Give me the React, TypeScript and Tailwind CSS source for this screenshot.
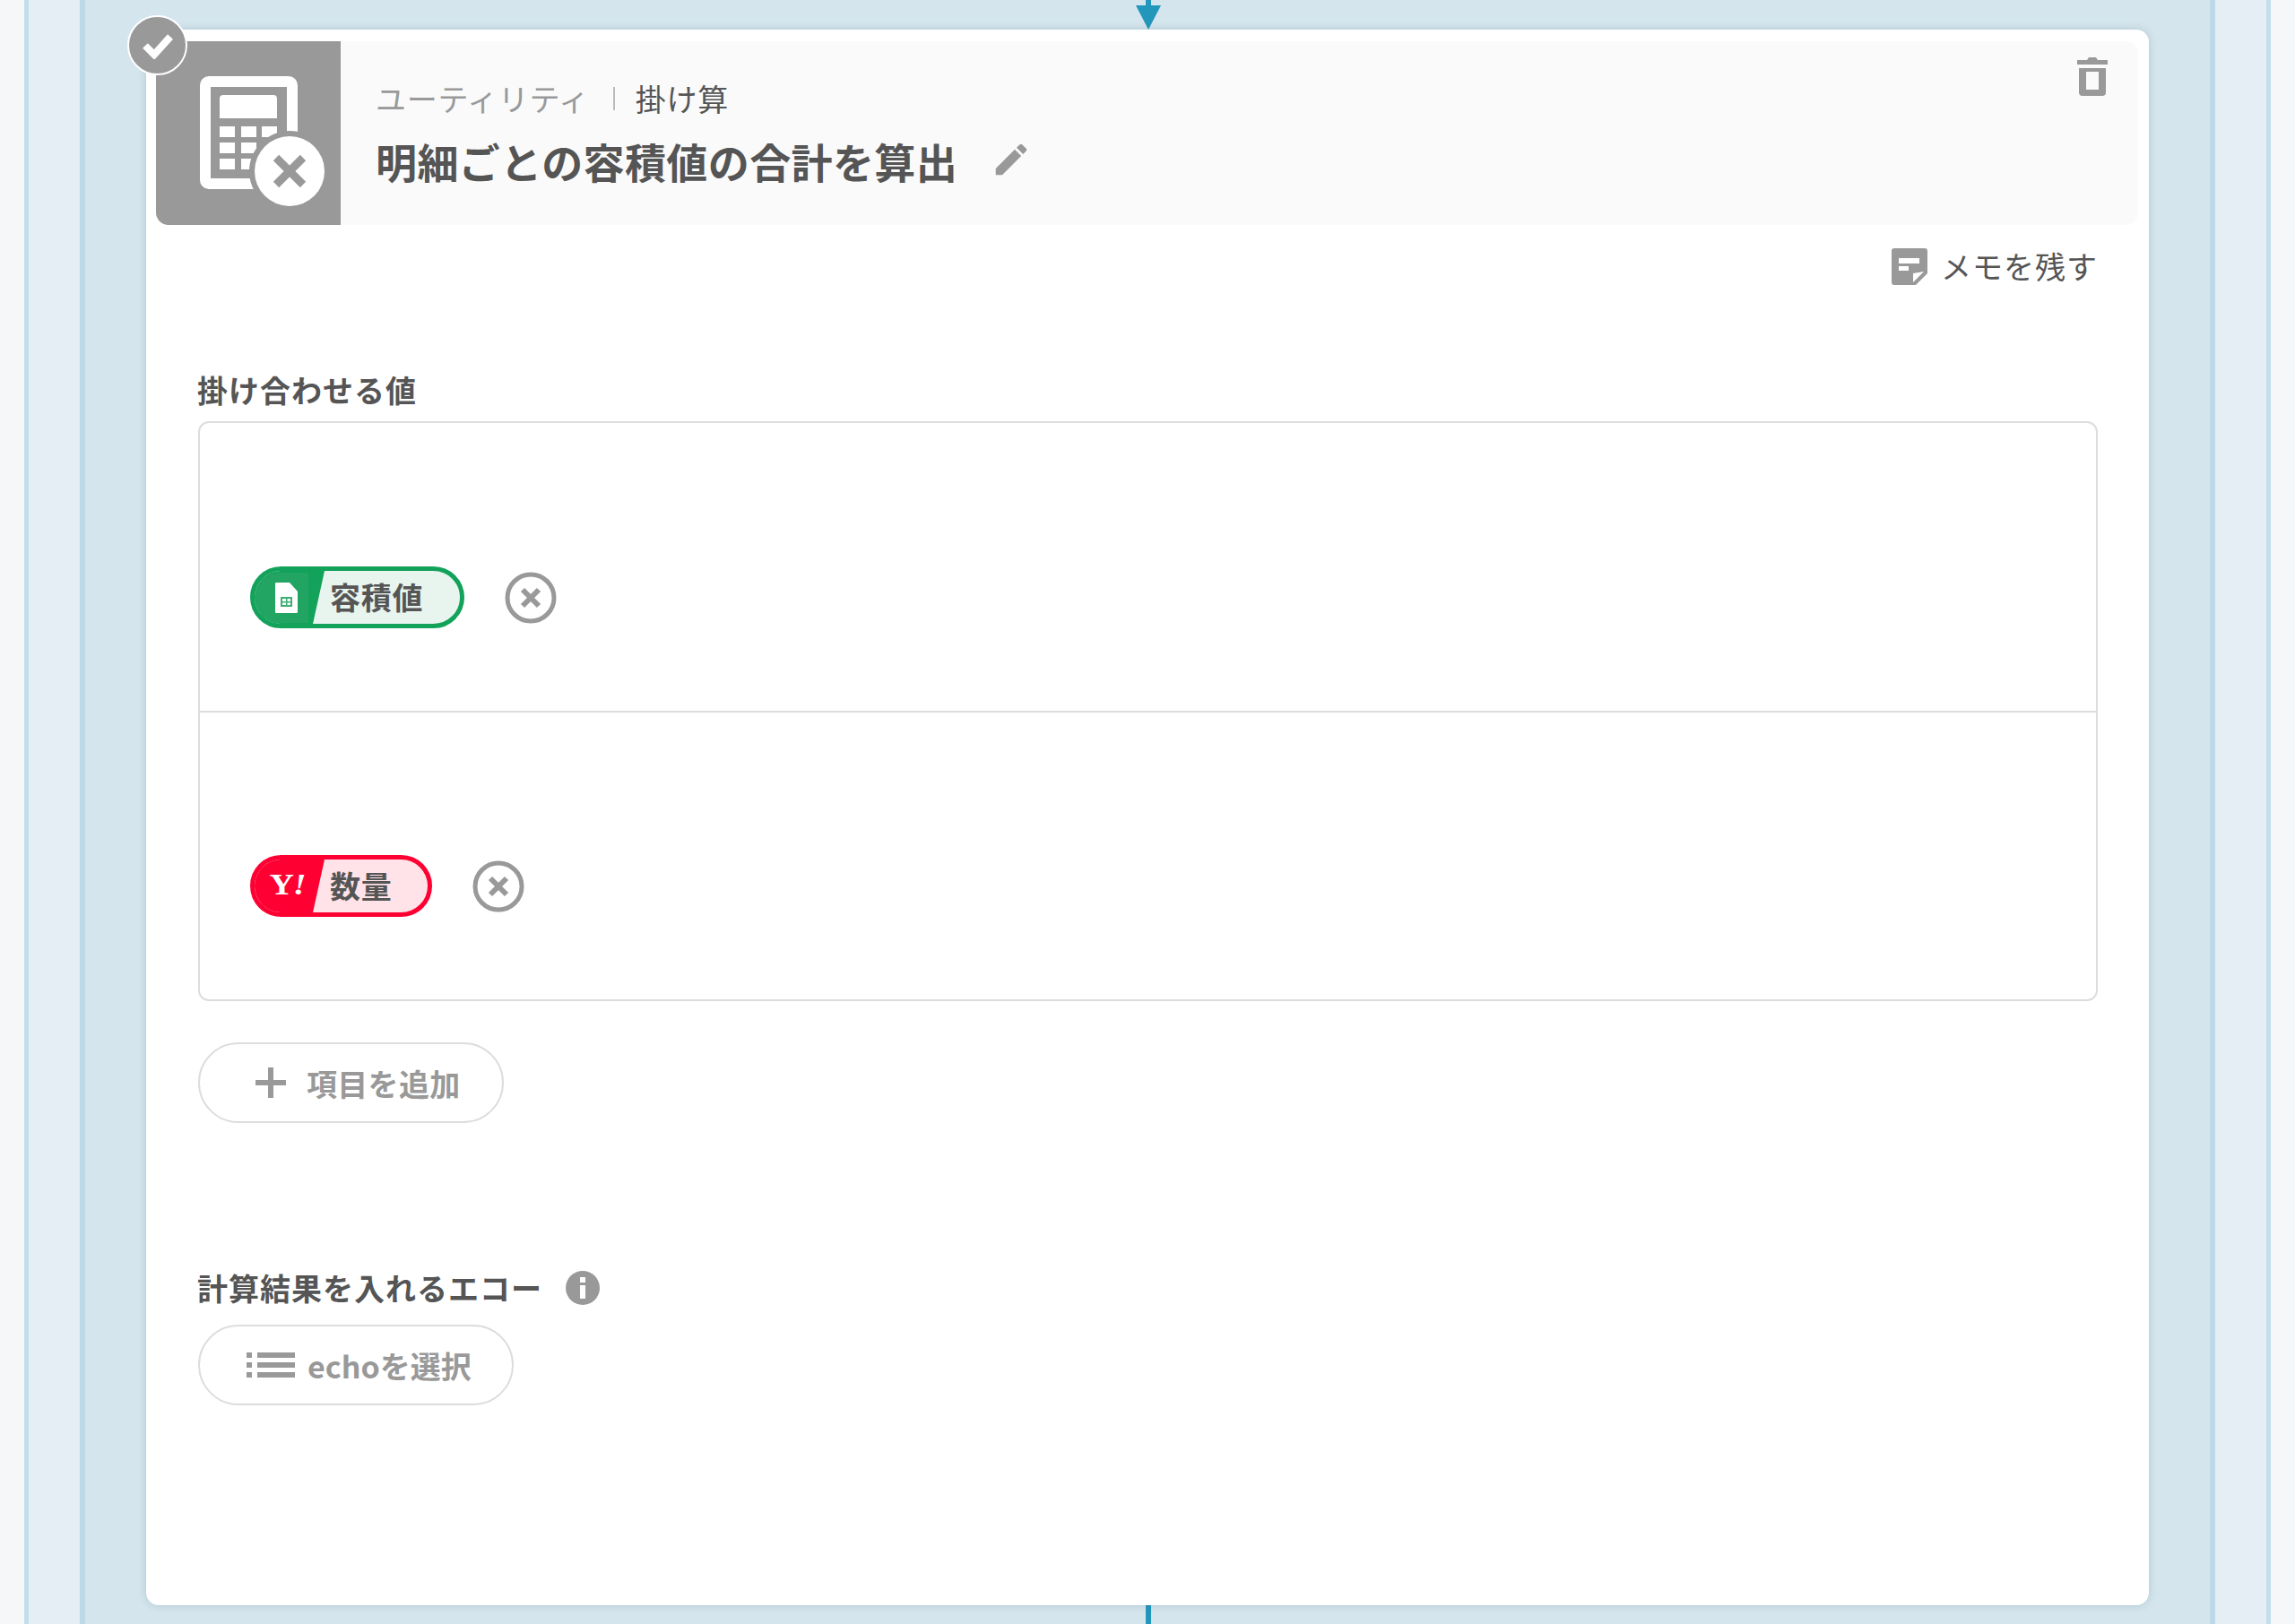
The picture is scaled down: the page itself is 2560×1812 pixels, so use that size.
const Cross = () => (
  <svg width="58" height="58" viewBox="0 0 58 58" className="block shrink-0">
    <circle cx="29" cy="29" r="26" fill="none" stroke="#999999" strokeWidth="5" />
    <path d="M20 20 38 38M38 20 20 38" stroke="#999999" strokeWidth="6" />
  </svg>
);

const Sheet = () => (
  <svg width="25" height="34" viewBox="0 0 25 34" className="block">
    <path d="M0 1a1 1 0 0 1 1-1H16L25 10V33a1 1 0 0 1-1 1H1a1 1 0 0 1-1-1Z" fill="#ffffff" />
    <path d="M6 16H19V27H6ZM8 18V21H12V18ZM13.500 18V21H17V18ZM8 22.500V25H12V22.500ZM13.500 22.500V25H17V22.500Z" fill="#3fae73" fillRule="evenodd" />
  </svg>
);

export default function App() {
  return (
    <div className="h-[1812px] w-[2560px] overflow-hidden bg-[#f5f7f9] px-[27px] font-['Noto_Sans_CJK_JP',sans-serif] text-[#555555]">
      <div className="h-full border-x-[5px] border-[#c3deea] bg-[#e6eef5] px-[57px]">
        <div className="flex h-full flex-col border-x-[6px] border-[#bcd9e7] bg-[#d4e5ed] px-[68px]">
          <svg width="30" height="33" viewBox="0 0 30 33" className="mx-auto block shrink-0 translate-x-px">
            <path d="M12 0H18V6H12Z" fill="#2396bc" />
            <path d="M1 6H29L15 33Z" fill="#2396bc" />
          </svg>
          <section className="relative flex h-[1758px] shrink-0 flex-col rounded-[14px] bg-white shadow-[0_0_10px_rgba(60,90,110,0.22)]">
            <div className="absolute left-[-21px] top-[-16px] flex h-[67px] w-[67px] items-center justify-center rounded-full border-2 border-white bg-[#999999]">
              <svg width="36" height="30" viewBox="0 0 36 30">
                <path d="M4 15 14 25 32 5" fill="none" stroke="#ffffff" strokeWidth="8" />
              </svg>
            </div>
            <header className="ml-[11px] mr-[12px] mt-[13px] flex h-[205px] shrink-0 rounded-r-[14px] rounded-bl-[14px] bg-[#fafafa]">
              <div className="h-[205px] w-[206px] shrink-0 overflow-hidden rounded-bl-[14px] bg-[#999999]">
                <svg width="206" height="205" viewBox="0 0 206 205" className="block">
                  <path
                    fillRule="evenodd"
                    fill="#ffffff"
                    d="M59 39H148A10 10 0 0 1 158 49V155A10 10 0 0 1 148 165H59A10 10 0 0 1 49 155V49A10 10 0 0 1 59 39ZM61 51V153H146V51Z"
                  />
                  <path d="M75 60H131A4 4 0 0 1 135 64V86H71V64A4 4 0 0 1 75 60Z" fill="#ffffff" />
                  <path
                    fill="#ffffff"
                    d="M71 95H88V107H71ZM95 95H112V107H95ZM118 95H135V107H118ZM71 113H88V125H71ZM95 113H112V125H95ZM118 113H135V125H118ZM71 131H88V143H71ZM95 131H112V143H95ZM118 131H135V143H118Z"
                  />
                  <circle cx="149" cy="145" r="45" fill="#999999" />
                  <circle cx="149" cy="145" r="39" fill="#ffffff" />
                  <path d="M134 130 164 160M164 130 134 160" stroke="#999999" strokeWidth="9" />
                </svg>
              </div>
              <div className="flex min-w-0 flex-1 flex-col pl-[39px] pt-[40px]">
                <div className="flex h-[48px] items-center text-[34px] leading-[48px] tracking-[0.7px]">
                  <span className="text-[#999999]">ユーティリティ</span>
                  <span className="ml-[26px] mr-[23px] h-[26px] w-[2px] bg-[#bbbbbb]" />
                  <span>掛け算</span>
                </div>
                <div className="mt-[10px] flex h-[70px] items-center">
                  <h1 className="text-[46px] font-bold leading-[70px] tracking-[0.4px]">明細ごとの容積値の合計を算出</h1>
                  <svg width="46" height="46" viewBox="0 0 24 24" fill="#999999" className="ml-[37px] mt-[-3px] block">
                    <path d="M3 17.250V21h3.750L17.810 9.940l-3.750-3.750L3 17.250zM20.710 7.040c.39-.39.39-1.020 0-1.410l-2.340-2.340c-.39-.39-1.020-.39-1.410 0l-1.830 1.830 3.750 3.750 1.830-1.830z" />
                  </svg>
                </div>
              </div>
              <svg width="34" height="43" viewBox="0 0 34 43" className="mr-[34px] mt-[18px] block shrink-0">
                <path d="M0 3H11L13 0H21L23 3H34V8H0Z" fill="#999999" />
                <path
                  fillRule="evenodd"
                  fill="#999999"
                  d="M2 12H32V39A4 4 0 0 1 28 43H6A4 4 0 0 1 2 39ZM10 16V36H24V16Z"
                />
              </svg>
            </header>

            <div className="flex flex-1 flex-col pl-[58px] pr-[57px]">
              <div className="mt-[22px] flex h-[48px] items-center justify-end">
                <svg width="40" height="41" viewBox="0 0 40 41" className="mr-[15px] block">
                  <path d="M3 0H37A3 3 0 0 1 40 3V28L27 41H3A3 3 0 0 1 0 38V3A3 3 0 0 1 3 0Z" fill="#999999" />
                  <path d="M8 11H31V17H8ZM8 20H19V25H8Z" fill="#ffffff" />
                  <path d="M24 38V28L36 26Z" fill="#ffffff" />
                </svg>
                <span className="text-[34px] leading-[48px] tracking-[1px]">メモを残す</span>
              </div>

              <label className="ml-[-1px] mt-[89px] block h-[50px] text-[34px] font-bold leading-[50px] tracking-[1px]">掛け合わせる値</label>
              <div className="mt-[10px] h-[647px] rounded-[12px] border-2 border-[#dddddd]">
                <div className="flex h-[323px] items-end border-b-2 border-[#dddddd] pb-[92px] pl-[56px]">
                  <div className="flex items-center">
                    <div className="flex h-[69px] overflow-hidden rounded-full border-[5px] border-[#12a25a] bg-[#e8f4ee] pr-[41px]">
                      <div className="flex h-full w-[78px] items-center bg-[#12a25a] [clip-path:polygon(0_0,100%_0,calc(100%-13px)_100%,0_100%)]">
                        <div className="flex h-[56px] w-[60px] items-center justify-center rounded-l-full bg-[#22a562] pl-[10px]">
                          <Sheet />
                        </div>
                      </div>
                      <span className="ml-[6px] text-[34px] font-bold leading-[58px] tracking-[0.7px]">容積値</span>
                    </div>
                    <div className="ml-[45px]">
                      <Cross />
                    </div>
                  </div>
                </div>
                <div className="flex h-[320px] items-end pb-[92px] pl-[56px]">
                  <div className="flex items-center">
                    <div className="flex h-[69px] overflow-hidden rounded-full border-[5px] border-[#ff0033] bg-[#ffe3e8] pr-[40px]">
                      <div className="flex h-full w-[78px] items-center justify-center bg-[#ff0033] pr-[6px] [clip-path:polygon(0_0,100%_0,calc(100%-13px)_100%,0_100%)]">
                        <span className="mt-[-2px] scale-x-[1.15] font-['Liberation_Serif',serif] text-[33px] font-bold leading-none tracking-[-1px] text-white">
                          Y<i>!</i>
                        </span>
                      </div>
                      <span className="ml-[6px] text-[34px] font-bold leading-[58px] tracking-[0.7px]">数量</span>
                    </div>
                    <div className="ml-[45px]">
                      <Cross />
                    </div>
                  </div>
                </div>
              </div>

              <button className="mt-[46px] flex h-[90px] w-[341px] items-center rounded-full border-2 border-[#dddddd] pl-[62px] text-[34px] font-bold tracking-[0.3px] text-[#999999]">
                <svg width="34" height="34" viewBox="0 0 34 34" className="mr-[23px] block">
                  <path d="M14 0H20V14H34V20H20V34H14V20H0V14H14Z" fill="#999999" />
                </svg>
                項目を追加
              </button>

              <div className="ml-[-1px] mt-[159px] flex h-[50px] items-center">
                <label className="text-[34px] font-bold leading-[50px] tracking-[1px]">計算結果を入れるエコー</label>
                <span className="ml-[26px] flex h-[38px] w-[38px] items-center justify-center rounded-full bg-[#999999]">
                  <svg width="8" height="24" viewBox="0 0 8 24">
                    <path d="M1 0H7V6H1ZM1 9H7V24H1Z" fill="#ffffff" />
                  </svg>
                </span>
              </div>
              <button className="mt-[16px] flex h-[90px] w-[352px] items-center rounded-full border-2 border-[#dddddd] pl-[52px] text-[34px] font-bold text-[#999999]">
                <svg width="54" height="30" viewBox="0 0 54 30" className="mr-[14px] block">
                  <path d="M0 1H6V7H0ZM12 1H54V7H12ZM0 12H6V18H0ZM12 12H54V18H12ZM0 23H6V29H0ZM12 23H54V29H12Z" fill="#999999" />
                </svg>
                echoを選択
              </button>
            </div>
          </section>
          <div className="ml-[1115px] h-[40px] w-[6px] bg-[#2396bc]" />
        </div>
      </div>
    </div>
  );
}
